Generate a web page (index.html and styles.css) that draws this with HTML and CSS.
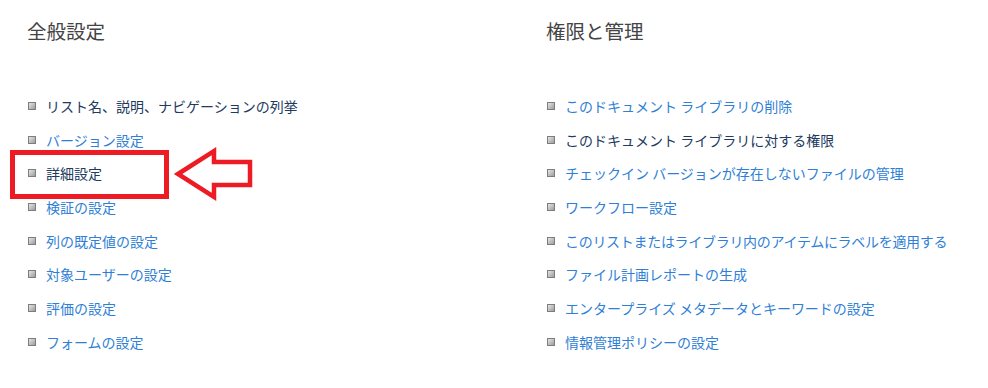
FILE: index.html
```html
<!DOCTYPE html>
<html lang="ja">
<head>
<meta charset="utf-8">
<link rel="stylesheet" href="styles.css">
</head>
<body>
<div class="page">
  <section class="col">
    <h2 class="heading">全般設定</h2>
    <ul class="links">
      <li class="dark">リスト名、説明、ナビゲーションの列挙</li>
      <li>バージョン設定</li>
      <li class="dark">詳細設定</li>
      <li>検証の設定</li>
      <li>列の既定値の設定</li>
      <li>対象ユーザーの設定</li>
      <li>評価の設定</li>
      <li>フォームの設定</li>
    </ul>
  </section>
  <section class="col">
    <h2 class="heading">権限と管理</h2>
    <ul class="links">
      <li>このドキュメント ライブラリの削除</li>
      <li class="dark">このドキュメント ライブラリに対する権限</li>
      <li>チェックイン バージョンが存在しないファイルの管理</li>
      <li>ワークフロー設定</li>
      <li class="tight">このリストまたはライブラリ内のアイテムにラベルを適用する</li>
      <li>ファイル計画レポートの生成</li>
      <li>エンタープライズ メタデータとキーワードの設定</li>
      <li>情報管理ポリシーの設定</li>
    </ul>
  </section>
  <div class="highlight"></div>
  <svg class="arrow" width="90" height="60" viewBox="0 0 90 60">
    <polygon points="8,29 44,6 44,17 80,17 80,40 44,40 44,52" fill="#fff" stroke="#ed1c24" stroke-width="4.5" stroke-linejoin="miter"/>
  </svg>
</div>
</body>
</html>
```

FILE: styles.css
```css
html, body {
  margin: 0;
  padding: 0;
  background: #fff;
}
body {
  font-family: "Noto Sans CJK JP", "Noto Sans", sans-serif;
}
.page {
  position: relative;
  width: 988px;
  height: 388px;
  display: grid;
  grid-template-columns: 519px 1fr;
  padding-left: 27px;
  box-sizing: border-box;
}
.col {
  padding-top: 19px;
}
.heading {
  margin: 0;
  font-weight: normal;
  font-size: 19.5px;
  line-height: 24px;
  color: #444;
}
.links {
  list-style: none;
  margin: 46px 0 0;
  padding: 0;
}
.links li {
  display: flex;
  align-items: center;
  gap: 10px;
  height: 33.7px;
  font-size: 14px;
  color: #2f7fd6;
  white-space: nowrap;
}
.links li::before {
  content: "";
  width: 8px;
  height: 8px;
  margin-left: 1px;
  box-sizing: border-box;
  border: 1px solid #7d7d7d;
  background: linear-gradient(135deg, #e6e6e6, #9c9c9c);
  flex: none;
}
.links li.dark {
  color: #223a5e;
}
.links li.tight {
  letter-spacing: -0.3px;
}
.highlight {
  position: absolute;
  left: 10px;
  top: 150px;
  width: 159px;
  height: 49px;
  box-sizing: border-box;
  border: 5px solid #ed1c24;
}
.arrow {
  position: absolute;
  left: 170px;
  top: 145px;
}
```
